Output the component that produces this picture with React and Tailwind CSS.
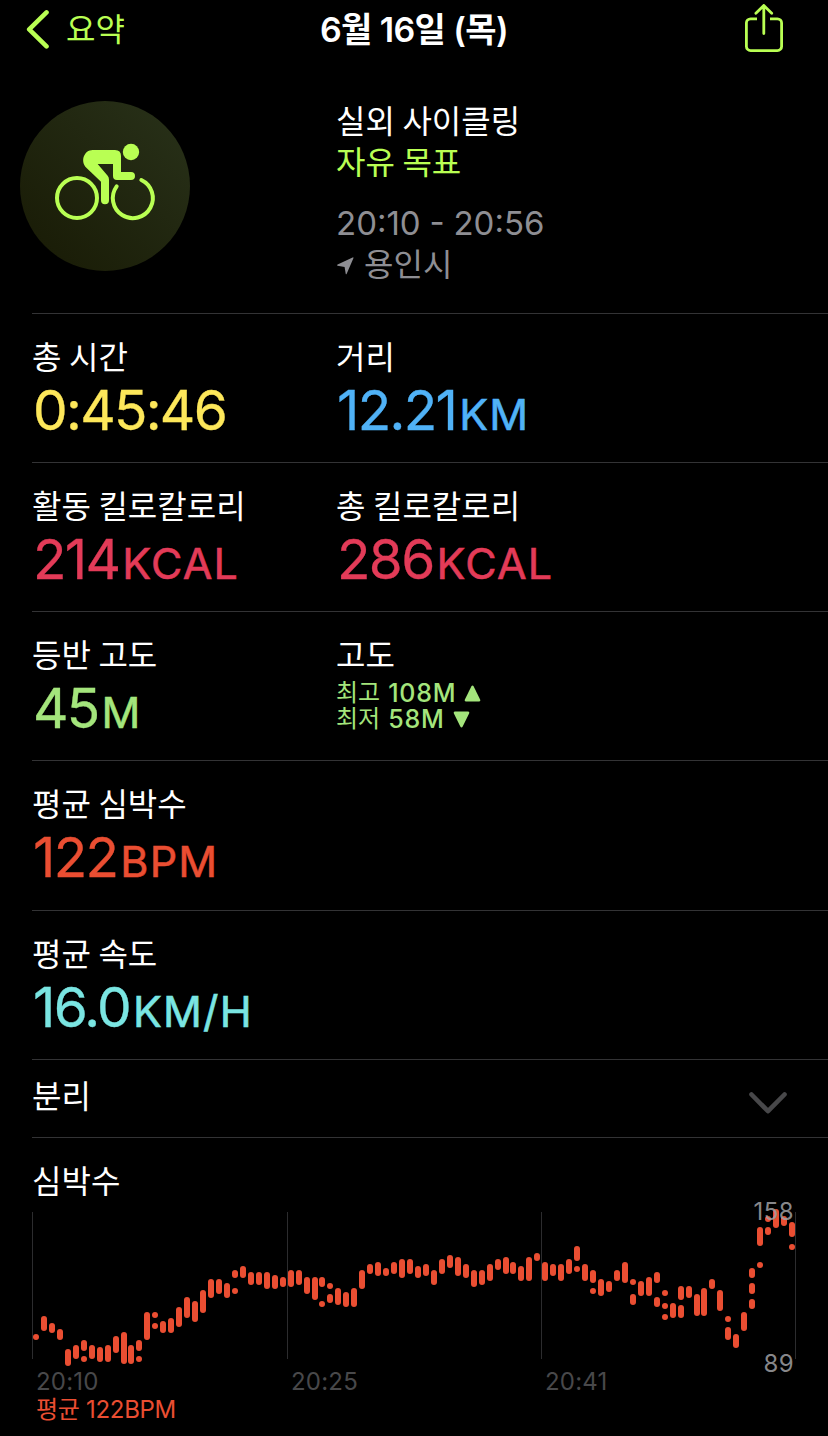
import React, { useState } from "react";

// vertical ranges [top, bottom] of every heart rate sample, one entry per column
const heartRate = [
  [[134, 140]], [[116, 131]], [[123, 133]], [[129, 140]], [[149, 166]], [[145, 159]],
  [[140, 151], [156, 162]], [[145, 159]], [[147, 162]], [[145, 162]], [[136, 153]], [[132, 164]],
  [[145, 164]], [[140, 151], [156, 162]], [[112, 140]], [[112, 118], [123, 129]], [[121, 133]], [[118, 133]],
  [[107, 127]], [[97, 118]], [[101, 122]], [[90, 113]], [[79, 98]], [[79, 94]],
  [[83, 98]], [[70, 78], [88, 94]], [[66, 78]], [[72, 85]], [[72, 85]], [[72, 89]],
  [[75, 89]], [[77, 87]], [[70, 87]], [[70, 85]], [[77, 94]], [[77, 100]],
  [[77, 87], [101, 107]], [[83, 89], [94, 103]], [[88, 105]], [[92, 107]], [[88, 107]], [[70, 89]],
  [[64, 74]], [[62, 76]], [[68, 76]], [[62, 74]], [[59, 78]], [[59, 74]],
  [[66, 78]], [[64, 76]], [[70, 85]], [[59, 74]], [[55, 68]], [[57, 76]],
  [[64, 78]], [[70, 87]], [[70, 85]], [[64, 81]], [[59, 70]], [[57, 74]],
  [[62, 74]], [[66, 81]], [[57, 81]], [[53, 61]], [[62, 81]], [[64, 76]],
  [[64, 81]], [[59, 74]], [[46, 61], [66, 72]], [[64, 81]], [[70, 83], [88, 94]], [[79, 96]],
  [[81, 92]], [[70, 81]], [[62, 83]], [[79, 85], [94, 105]], [[81, 96]], [[77, 96]],
  [[72, 83], [97, 107]], [[90, 96], [103, 109], [114, 120]], [[103, 118]], [[86, 100], [105, 118]], [[86, 98]], [[94, 116]],
  [[88, 116]], [[79, 89]], [[90, 111]], [[116, 122], [127, 140]], [[134, 148]], [[112, 131]],
  [[68, 78], [83, 94], [99, 109]], [[27, 46], [62, 68]], [[16, 22], [27, 35]], [[9, 28]], [[16, 26]], [[22, 37], [44, 50]],
];

const Header = () => {
  return (
    <header className="grid h-[58px] grid-cols-3 items-center px-[26px]">
      <button type="button" className="flex items-center gap-4 text-left text-[32px] leading-[40px] text-[#b9ff53]">
        <svg width="24" height="40" viewBox="0 0 24 40" fill="none" stroke="currentColor" strokeWidth="4.6" strokeLinecap="round" strokeLinejoin="round">
          <path d="M20.5 3.4 3.2 20.4l17.3 17" />
        </svg>
        <span className="pt-0.5">요약</span>
      </button>
      <h1 className="whitespace-nowrap pt-0.5 text-center text-[34px] font-semibold leading-[40px] tracking-[-0.6px] text-white">6월 16일 (목)</h1>
      <button type="button" className="mr-[18px] justify-self-end text-[#b9ff53]" aria-label="공유">
        <svg width="40" height="50" viewBox="0 0 40 50" fill="none" stroke="currentColor" strokeWidth="2.8" strokeLinecap="round" strokeLinejoin="round">
          <path strokeLinecap="butt" d="M13 14.8H6.6a4.2 4.2 0 0 0-4.2 4.2v23.4a4.2 4.2 0 0 0 4.2 4.2h26.8a4.2 4.2 0 0 0 4.2-4.2V19a4.2 4.2 0 0 0-4.2-4.2H26" />
          <path d="M19.8 29.5V1.6M11.9 9.2l7.9-7.8 7.9 7.8" />
        </svg>
      </button>
    </header>
  );
};

const CyclingBadge = () => {
  return (
    <div className="flex size-[170px] items-center justify-center rounded-full bg-linear-to-tr from-[#181a05] to-[#29321a] text-[#b9ff53]">
      <svg width="170" height="170" viewBox="0 0 510 510">
        <g fill="none" stroke="currentColor" strokeWidth="12">
          <circle cx="171" cy="291" r="60" />
          <path strokeLinecap="round" d="M364 237A60 60 0 1 1 290 256" />
        </g>
        <circle cx="333" cy="153" r="24.5" fill="currentColor" />
        <path
          fill="currentColor"
          d="M218 147H285Q303 147 303 165V213H333A12 12 0 0 1 333 237H291Q279 237 279 225V189H233L263 224Q267 229 267 236V298A12 12 0 0 1 243 298V242L199 200C180 181 192 147 218 147Z"
        />
      </svg>
    </div>
  );
};

const Workout = () => {
  return (
    <section className="flex h-[255px] pl-5">
      <div className="w-[316px] pt-[43px]">
        <CyclingBadge />
      </div>
      <div className="pt-[43px] text-[32px] leading-[41px]">
        <p className="text-white [word-spacing:-1.5px]">실외 사이클링</p>
        <p className="text-[#b9ff53] [word-spacing:-1.5px]">자유 목표</p>
        <p className="mt-[20px] text-[33px] text-[#8e8e93] [word-spacing:-0.5px]">20:10 - 20:56</p>
        <p className="flex items-center text-[#8e8e93]">
          <svg width="18" height="18" viewBox="0 0 18 18" className="mt-[3px] mr-[9px] ml-[1px]" fill="currentColor">
            <path d="M.6 7.5 15.6.4q1.2-.4.8.8L9.7 16.8q-.6 1-1 0L7.6 9.9.6 8.8q-1-.6 0-1.3Z" />
          </svg>
          용인시
        </p>
      </div>
    </section>
  );
};

const Stat = ({ label, value, unit, color }) => {
  return (
    <div>
      <p className="text-[32px] leading-[40px] text-white [word-spacing:-1.5px]">{label}</p>
      <p className={`flex items-baseline pl-px leading-[65px] ${color}`}>
        <span className="text-[55px] tracking-[-1.7px] [-webkit-text-stroke:0.3px]">{value}</span>
        {unit && <span className="ml-[3px] text-[43px] tracking-[1.2px] [-webkit-text-stroke:0.6px]">{unit}</span>}
      </p>
    </div>
  );
};

const Row = ({ children, height = "h-[149px]" }) => {
  return (
    <section className={`ml-8 grid grid-cols-[304px_1fr] border-t border-[#333335] pt-[24px] ${height}`}>
      {children}
    </section>
  );
};

const Elevation = () => {
  return (
    <div>
      <p className="text-[32px] leading-[40px] text-white">고도</p>
      <div className="mt-1 text-[24px] leading-[26px] text-[#a4e57c]">
        <p className="flex items-center">
          최고
          <span className="ml-2 text-[25px] font-medium tracking-[0.8px]">108M</span>
          <svg width="17" height="17" viewBox="0 0 17 17" className="ml-2" fill="currentColor">
            <path d="M7.3 1.4q1.2-2 2.4 0l6.4 13.2q.7 2-1.2 2H2.1q-1.9 0-1.2-2Z" />
          </svg>
        </p>
        <p className="flex items-center">
          최저
          <span className="ml-2 text-[25px] font-medium tracking-[0.8px]">58M</span>
          <svg width="17" height="17" viewBox="0 0 17 17" className="ml-2" fill="currentColor">
            <path d="M7.3 15.6q1.2 2 2.4 0l6.4-13.2q.7-2-1.2-2H2.1Q.2.4.9 2.4Z" />
          </svg>
        </p>
      </div>
    </div>
  );
};

const Splits = () => {
  const [open, setOpen] = useState(false);

  return (
    <section className="ml-8 h-[78px] border-t border-[#333335]">
      <button type="button" onClick={() => setOpen(!open)} className="flex w-full items-start justify-between pr-[40px] pt-[17px] text-[32px] leading-[40px] text-white">
        분리
        <svg width="40" height="24" viewBox="0 0 40 24" className={`mt-[14px] ${open ? "rotate-180" : ""}`} fill="none" stroke="#48484a" strokeWidth="4.6" strokeLinecap="round" strokeLinejoin="round">
          <path d="M3.5 3.5 20 20.2 36.5 3.5" />
        </svg>
      </button>
    </section>
  );
};

const HeartRateChart = () => {
  return (
    <section className="ml-8 border-t border-[#333335] pt-[26px]">
      <h2 className="text-[32px] leading-[36px] text-white">심박수</h2>
      <div className="relative h-[168px] w-[764px]">
        <svg width="764" height="168" viewBox="32 0 764 168" className="block">
          {[32, 287, 541, 795].map((x) => (
            <rect key={x} x={x} y="12" width="1" height="147" fill="#2c2c2e" />
          ))}
          {heartRate.map((ranges, i) =>
            ranges.map(([top, bottom]) => (
              <rect
                key={`${i}-${top}`}
                x={33 + 8 * i - Math.floor((i + 12) / 24)}
                y={top}
                width="6"
                height={bottom - top}
                rx="3"
                fill="#ea4e32"
              />
            ))
          )}
        </svg>
        {/* max and min values over the plot */}
        <div className="absolute inset-y-0 right-[2px] flex flex-col justify-between text-right text-[24px] leading-[24px] tracking-[0.4px] text-[#a0a0a4]/85">
          <span>158</span>
          <span className="mb-[-8px]">89</span>
        </div>
      </div>
      <div className="grid w-[764px] grid-cols-[255px_254px_255px] pl-1 text-[24px] leading-[28px] tracking-[0.2px] text-[#48484a]">
        <span>20:10</span>
        <span>20:25</span>
        <span>20:41</span>
      </div>
      <p className="pl-1 text-[24px] leading-[28px] tracking-[-0.3px] text-[#ea4e32]">평균 122BPM</p>
    </section>
  );
};

const App = () => {
  return (
    <main className="h-[1436px] w-[828px] overflow-hidden bg-black font-['Inter','Noto_Sans_CJK_KR',sans-serif]">
      <Header />
      <Workout />
      <Row>
        <Stat label="총 시간" value="0:45:46" color="text-[#fde75a]" />
        <Stat label="거리" value="12.21" unit="KM" color="text-[#50b2f7]" />
      </Row>
      <Row>
        <Stat label="활동 킬로칼로리" value="214" unit="KCAL" color="text-[#e33b58]" />
        <Stat label="총 킬로칼로리" value="286" unit="KCAL" color="text-[#e33b58]" />
      </Row>
      <Row>
        <Stat label="등반 고도" value="45" unit="M" color="text-[#a4e57c]" />
        <Elevation />
      </Row>
      <Row height="h-[150px]">
        <Stat label="평균 심박수" value="122" unit="BPM" color="text-[#ea4e32]" />
      </Row>
      <Row>
        <Stat label="평균 속도" value="16.0" unit="KM/H" color="text-[#7ae5e2]" />
      </Row>
      <Splits />
      <HeartRateChart />
    </main>
  );
};

export default App;
